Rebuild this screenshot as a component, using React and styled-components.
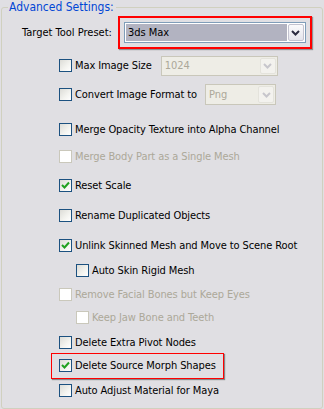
import * as React from "react"
import styled, {createGlobalStyle} from "styled-components"

const GlobalStyle = createGlobalStyle`
  body{
    margin: 0;
    background: #e0dfe3;
    font-family: "DejaVu Sans Condensed", "DejaVu Sans", sans-serif;
    font-size: 11px;
    color: #000;
  }
`

const Group = styled.fieldset`
  margin: 0 1px;
  height: 409px;
  box-sizing: border-box;
  border: 1px solid #d0d0bf;
  border-radius: 3px;
  padding: 2px 0 0 0;
  min-width: 0;
`

const Legend = styled.legend`
  margin-left: 6px;
  padding: 0 2px 0 1px;
  color: #0046d5;
  font-size: 12px;
  line-height: 14px;
`

const PresetRow = styled.div`
  display: flex;
  align-items: center;
  padding-left: 20px;
`

const PresetLabel = styled.span`
  margin-right: 6px;
`

const RedFrame = styled.div`
  border: 2px solid #f00;
  padding: 4px;
  box-shadow: 1px 1px 1px rgba(0,0,0,0.35);
`

const Combo = styled.div`
  box-sizing: border-box;
  display: flex;
  width: ${p => p.$width}px;
  height: ${p => p.$height}px;
  margin-left: ${p => p.$gap || 0}px;
  flex-shrink: 0;
  border: 1px solid ${p => p.$disabled ? "#c9c7ba" : "#7f9db9"};
  background: ${p => p.$disabled ? "#eeede6" : "#fff"};
  padding: 1px;
`

const ComboText = styled.div`
  flex: 1;
  display: flex;
  align-items: center;
  padding-left: 2px;
  background: ${p => p.$disabled ? "transparent" : "#b2b3c1"};
  color: ${p => p.$disabled ? "#aca899" : "#000"};
`

const ComboButton = styled.div`
  box-sizing: border-box;
  width: 16px;
  margin-left: 1px;
  display: flex;
  align-items: center;
  justify-content: center;
  border: 1px solid ${p => p.$disabled ? "#e4e3dc" : "#c3c3d0"};
  border-radius: 2px;
  background: ${p => p.$disabled ? "#f3f2ee" : "linear-gradient(#fbfbfc, #e4e4ec)"};
`

const List = styled.div`
  display: flex;
  flex-direction: column;
  align-items: flex-start;
`

const Row = styled.div`
  position: relative;
  display: flex;
  align-items: center;
  height: 13px;
  margin-top: ${p => p.$top}px;
  margin-left: ${p => p.$indent ? 74 : 57}px;
  color: ${p => p.$disabled ? "#aca899" : "#000"};
  white-space: nowrap;

  ${p => p.$marked && `
    &::after{
      content: "";
      position: absolute;
      left: -8px;
      top: -6px;
      right: -8px;
      bottom: -7px;
      border: 1px solid #f00;
      box-shadow: 1px 1px 1px rgba(0,0,0,0.4);
    }
  `}
`

const Box = styled.span`
  box-sizing: border-box;
  width: 13px;
  height: 13px;
  flex-shrink: 0;
  display: flex;
  align-items: center;
  justify-content: center;
  border: 1px solid ${p => p.$disabled ? "#cac8bb" : "#1c5180"};
  background: ${p => p.$disabled ? "#fff" : "linear-gradient(135deg, #dcdcd7 0%, #f4f4f0 60%, #fff 100%)"};
`

const Label = styled.span`
  margin-left: 3px;
  letter-spacing: -0.1px;
`

const Chevron = ({disabled}) => (
  <svg width="9" height="6" viewBox="0 0 9 6">
    <polyline points="1,1 4.5,4.5 8,1" fill="none" stroke={disabled ? "#c7c6cc" : "#2b2b40"} strokeWidth="2" />
  </svg>
)

const Check = () => (
  <svg width="9" height="9" viewBox="0 0 9 9">
    <polyline points="1,4 3.5,6.5 8,1.5" fill="none" stroke="#21a121" strokeWidth="2" />
  </svg>
)

const Select = ({value, width, height, gap, disabled}) => (
  <Combo $width={width} $height={height} $gap={gap} $disabled={disabled}>
    <ComboText $disabled={disabled}>{value}</ComboText>
    <ComboButton $disabled={disabled}><Chevron disabled={disabled} /></ComboButton>
  </Combo>
)

const Option = ({label, top, checked, disabled, indent, marked, children}) => (
  <Row $top={top} $indent={indent} $disabled={disabled} $marked={marked}>
    <Box $disabled={disabled}>{checked && <Check />}</Box>
    <Label>{label}</Label>
    {children}
  </Row>
)

const App = () => {
  return (
    <>
      <GlobalStyle />
      <Group>
        <Legend>Advanced Settings:</Legend>
        <PresetRow>
          <PresetLabel>Target Tool Preset:</PresetLabel>
          <RedFrame>
            <Select value="3ds Max" width={182} height={21} />
          </RedFrame>
        </PresetRow>
        <List>
          <Option label="Max Image Size" top={10}>
            <Select value="1024" width={117} height={20} gap={9} disabled />
          </Option>
          <Option label="Convert Image Format to" top={16}>
            <Select value="Png" width={71} height={21} gap={8} disabled />
          </Option>
          <Option label="Merge Opacity Texture into Alpha Channel" top={22} />
          <Option label="Merge Body Part as a Single Mesh" top={14} disabled />
          <Option label="Reset Scale" top={16} checked />
          <Option label="Rename Duplicated Objects" top={17} />
          <Option label="Unlink Skinned Mesh and Move to Scene Root" top={17} checked />
          <Option label="Auto Skin Rigid Mesh" top={12} indent />
          <Option label="Remove Facial Bones but Keep Eyes" top={11} disabled />
          <Option label="Keep Jaw Bone and Teeth" top={10} indent disabled />
          <Option label="Delete Extra Pivot Nodes" top={12} />
          <Option label="Delete Source Morph Shapes" top={10} checked marked />
          <Option label="Auto Adjust Material for Maya" top={12} />
        </List>
      </Group>
    </>
  )
}

export default App
